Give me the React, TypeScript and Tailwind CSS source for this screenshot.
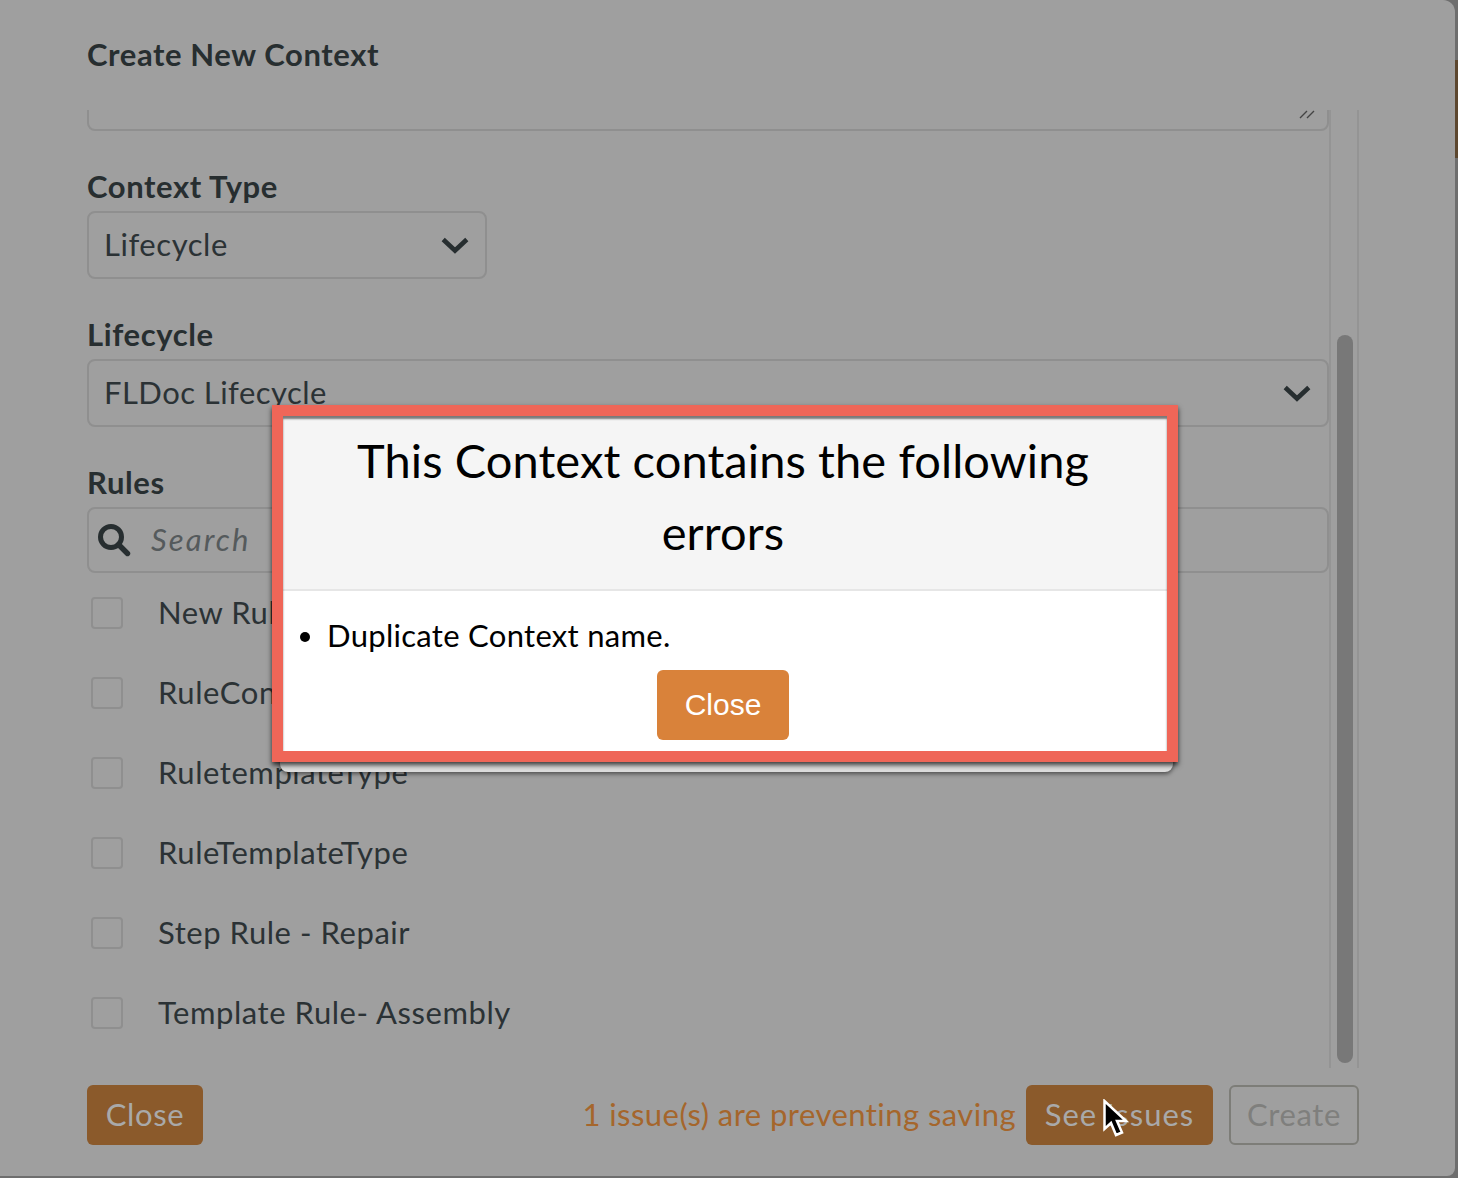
import React from "react";

const font = { fontFamily: '"Lato", "Liberation Sans", sans-serif' };

function Chevron() {
  return (
    <svg width="30" height="20" viewBox="0 0 30 20" className="shrink-0">
      <path d="M3.2 4.5 L15 15.5 L26.8 4.5" fill="none" stroke="#272e30" strokeWidth="4.6" />
    </svg>
  );
}

function Rule({ label }: { label: string }) {
  return (
    <div className="flex h-[80px] items-center">
      <div className="ml-[4px] h-[32px] w-[32px] rounded-[4px] border-2 border-[#8f8f8f]" />
      <span className="ml-[35px] pb-[2px] text-[31px] tracking-[0.55px] text-[#2b3235]">{label}</span>
    </div>
  );
}

export default function App() {
  const rules = ["New Rule", "RuleContext", "RuletemplateType", "RuleTemplateType", "Step Rule - Repair", "Template Rule- Assembly"];
  return (
    <div className="relative h-[1178px] w-[1458px] overflow-hidden bg-[#6e6e6e]" style={font}>
      <div className="absolute right-0 top-[60px] h-[98px] w-[3px] bg-[#5c472f]" />
      <div className="relative flex h-[1176px] w-[1455px] flex-col rounded-br-[8px] rounded-tr-[12px] bg-[#9f9f9f] pl-[87px] pr-[96px]">
        <div className="flex h-[110px] items-center pb-[1px]">
          <h1 className="text-[31px] font-bold tracking-[0.6px] text-[#272e30]">Create New Context</h1>
        </div>
        <div className="flex h-[958px] overflow-hidden">
          <div className="w-[1242px] shrink-0">
            <div className="relative -mt-[40px] h-[61px] rounded-b-[8px] border-2 border-[#8f8f8f]">
              <svg width="16" height="10" viewBox="0 0 16 10" className="absolute bottom-[9px] right-[12px]">
                <path d="M1 8 L8 1 M8 8 L15 1" stroke="#444" strokeWidth="1.4" />
              </svg>
            </div>
            <div className="mt-[35px] text-[31px] font-bold leading-[40px] tracking-[0.6px] text-[#272e30]">Context Type</div>
            <div className="mt-[5px] flex h-[68px] w-[400px] items-center justify-between rounded-[8px] border-2 border-[#8f8f8f] pl-[15px] pr-[15px] text-[31px] tracking-[0.55px] text-[#2b3235]">
              <span className="pb-[2px]">Lifecycle</span>
              <Chevron />
            </div>
            <div className="mt-[35px] text-[31px] font-bold leading-[40px] tracking-[0.6px] text-[#272e30]">Lifecycle</div>
            <div className="mt-[5px] flex h-[68px] items-center justify-between rounded-[8px] border-2 border-[#8f8f8f] pl-[15px] pr-[15px] text-[31px] tracking-[0.45px] text-[#2b3235]">
              <span className="pb-[2px]">FLDoc Lifecycle</span>
              <Chevron />
            </div>
            <div className="mt-[35px] text-[31px] font-bold leading-[40px] tracking-[0.6px] text-[#272e30]">Rules</div>
            <div className="mt-[5px] flex h-[66px] items-center rounded-[8px] border-2 border-[#8f8f8f] pl-[8px] text-[31px] italic tracking-[2.1px] text-[#555a5c]">
              <svg width="34" height="34" viewBox="0 0 34 34" className="shrink-0">
                <circle cx="14" cy="14" r="10.5" fill="none" stroke="#272e30" strokeWidth="5" />
                <path d="M21.5 21.5 L30.5 30.5" stroke="#272e30" strokeWidth="5.4" strokeLinecap="round" />
              </svg>
              <span className="ml-[20px] pb-[2px]">Search</span>
            </div>
            <div>
              {rules.map((r) => (
                <Rule key={r} label={r} />
              ))}
            </div>
          </div>
          <div className="flex w-[30px] shrink-0 justify-center border-x-2 border-[#949494]">
            <div className="ml-[2px] mt-[225px] h-[728px] w-[16px] rounded-full bg-[#787878]" />
          </div>
        </div>
        <div className="mt-[17px] flex items-center text-[31px] tracking-[0.6px]">
          <div className="flex h-[60px] w-[116px] items-center justify-center rounded-[6px] bg-[#8b5a2b] pb-[2px] text-[#a9a9a9]">Close</div>
          <span className="ml-auto pb-[2px] tracking-[0.45px] text-[#a5662c]">1 issue(s) are preventing saving</span>
          <div className="ml-[10px] flex h-[60px] w-[187px] items-center justify-center rounded-[6px] bg-[#8b5a2b] pb-[2px] tracking-[1px] text-[#a9a9a9]">See Issues</div>
          <div className="ml-[16px] flex h-[60px] w-[130px] items-center justify-center rounded-[6px] border-2 border-[#7d7d78] pb-[2px] text-[#7f7f7d]">Create</div>
        </div>
      </div>

      <div className="absolute left-[280px] top-[415px] h-[357px] w-[893px] rounded-b-[8px] bg-[#dcdcdc] shadow-[0_2px_4px_rgba(0,0,0,0.5)]" />
      <div className="absolute left-[272px] top-[405px] w-[906px] border-[11px] border-[#ef6658] bg-white shadow-[0_3px_5px_rgba(0,0,0,0.75)]">
        <div className="flex h-[175px] flex-col items-center border-b-2 border-[#e6e6e6] bg-[#f5f5f5] pr-[4px] pt-[8px] text-center text-[47px] leading-[72px] tracking-[0.1px] text-black">
          <span>This Context contains the following</span>
          <span>errors</span>
        </div>
        <div className="h-[160px] px-[17px] pt-[24px] text-[31px] tracking-[0.3px] text-black">
          <ul className="list-disc pl-[27px] leading-[40px]">
            <li>Duplicate Context name.</li>
          </ul>
          <div className="mt-[15px] flex justify-center pr-[4px]">
            <div
              className="flex h-[70px] w-[132px] items-center justify-center rounded-[6px] bg-[#d9823a] pb-[1px] text-[30px] tracking-normal text-white"
              style={{ fontFamily: '"Liberation Sans", sans-serif' }}
            >
              Close
            </div>
          </div>
        </div>
        <div className="pointer-events-none absolute inset-0 shadow-[inset_0_3px_2px_rgba(0,0,0,0.5)]" />
      </div>

      <svg width="28" height="42" viewBox="0 0 28 42" className="absolute left-[1102px] top-[1099px]">
        <path d="M2.5 2 L2.5 30 L9 24 L14 36 L20 33.5 L15 22 L24 22 Z" fill="#000" stroke="#fff" strokeWidth="2.5" />
      </svg>
    </div>
  );
}
